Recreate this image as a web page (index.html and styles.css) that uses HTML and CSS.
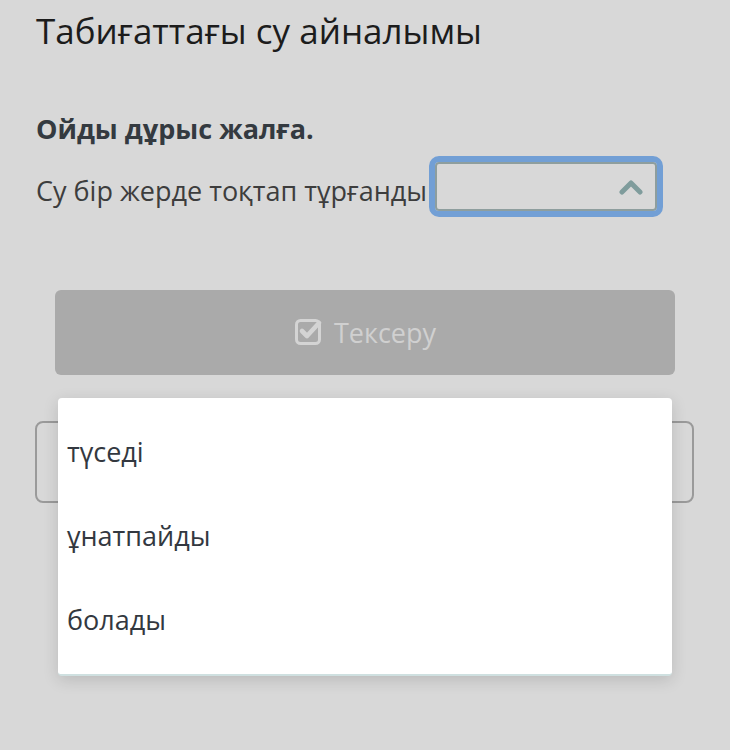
FILE: index.html
```html
<!DOCTYPE html>
<html lang="kk">
<head>
<meta charset="utf-8">
<link rel="stylesheet" href="styles.css">
</head>
<body>
<div class="page">
  <h1 class="title">Табиғаттағы су айналымы</h1>
  <p class="instruction">Ойды дұрыс жалға.</p>
  <div class="sentence">
    <span class="sentence-text">Су бір жерде тоқтап тұрғанды</span>
    <div class="select">
      <svg class="chevron" width="24" height="16" viewBox="0 0 24 16"><path d="M3 13 L12 4 L21 13" fill="none" stroke="#7f9c9c" stroke-width="5" stroke-linecap="round" stroke-linejoin="round"/></svg>
    </div>
  </div>
  <div class="button-wrap">
    <div class="check-button">
      <svg class="check-icon" width="30" height="30" viewBox="0 0 30 30"><rect x="2.5" y="4.5" width="23" height="23" rx="4" fill="none" stroke="#d4d4d4" stroke-width="3"/><path d="M8 15 L13 20 L25 7" fill="none" stroke="#d4d4d4" stroke-width="4.6" stroke-linecap="round" stroke-linejoin="round"/></svg>
      <span>Тексеру</span>
    </div>
  </div>
  <div class="feedback"></div>
</div>
<ul class="dropdown">
  <li>түседі</li>
  <li>ұнатпайды</li>
  <li>болады</li>
</ul>
</body>
</html>
```
FILE: styles.css
```css
html, body {
  margin: 0;
  padding: 0;
  background: #d8d8d8;
  width: 730px;
  height: 750px;
  overflow: hidden;
  font-family: "Open Sans", "Noto Sans", sans-serif;
}
.page {
  padding: 10px 36px 0 36px;
}
.title {
  margin: 0;
  font-size: 35px;
  font-weight: 400;
  line-height: 42px;
  color: #1c1c1c;
}
.instruction {
  margin: 61px 0 0 0;
  font-size: 27px;
  font-weight: 700;
  line-height: 32px;
  color: #343a40;
}
.sentence {
  display: flex;
  align-items: center;
  margin-top: 11px;
}
.sentence-text {
  font-size: 27px;
  line-height: 36px;
  padding-top: 8px;
  color: #3d3d3d;
}
.select {
  box-sizing: border-box;
  width: 234px;
  height: 61px;
  margin-left: 2px;
  border: 6px solid #729fd5;
  border-radius: 10px;
  box-shadow: inset 0 0 0 2px #8e9e9e;
  display: flex;
  align-items: center;
  justify-content: flex-end;
  padding-right: 14px;
}
.button-wrap {
  padding: 0 19px;
  margin-top: 73px;
}
.check-button {
  height: 85px;
  background: #aaaaaa;
  border-radius: 6px;
  display: flex;
  align-items: center;
  justify-content: center;
  gap: 10px;
  color: #d0d0d0;
  font-size: 27px;
}
.check-icon {
  margin-top: -4px;
}
.feedback {
  margin: 46px 0 0 -1px;
  height: 82px;
  box-sizing: border-box;
  border: 2px solid #9a9a9a;
  border-radius: 8px;
}
.dropdown {
  position: absolute;
  left: 58px;
  top: 398px;
  width: 614px;
  height: 278px;
  box-sizing: border-box;
  margin: 0;
  padding: 12px 0 0 0;
  list-style: none;
  background: #ffffff;
  border-radius: 4px;
  border-bottom: 2px solid #cfe0e0;
  box-shadow: 0 4px 16px rgba(0,0,0,0.14);
}
.dropdown li {
  height: 84px;
  line-height: 84px;
  padding-left: 9px;
  font-size: 27px;
  color: #333840;
}
```
